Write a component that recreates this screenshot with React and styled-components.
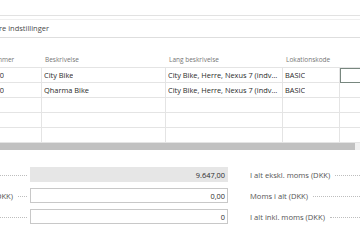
import React from 'react';
import styled, { createGlobalStyle } from 'styled-components';

const GlobalStyle = createGlobalStyle`
  html, body {
    margin: 0;
    padding: 0;
    background: #ffffff;
  }
  body {
    font-family: 'Open Sans', 'Noto Sans', sans-serif;
    color: #212121;
    overflow: hidden;
  }
`;

const Page = styled.div`
  width: 360px;
  height: 240px;
  overflow: hidden;
  background: #fff;
`;

const TopStrip = styled.div`
  height: 15px;
  border-bottom: 1px solid #e2e2e2;
`;

const OptionsBar = styled.div`
  margin-top: 3px;
  height: 17px;
  display: flex;
  align-items: center;
  border-top: 1px solid #efefef;
  border-bottom: 1px solid #dedede;
  overflow: hidden;
`;

const OptionsText = styled.span`
  margin-left: -11px;
  margin-top: -1px;
  font-size: 7.5px;
  color: #4a4a4a;
  white-space: nowrap;
`;

const Lines = styled.div`
  margin-top: 14px;
  margin-left: -14px;
  width: 394px;
`;

const Row = styled.div`
  display: grid;
  grid-template-columns: 56px 124px 117px 57px 40px;
  height: ${(p) => (p.$header ? 16 : 15)}px;
  box-sizing: border-box;
  border-bottom: 1px solid #e4e4e4;
`;

const HeadCell = styled.div`
  display: flex;
  align-items: center;
  padding-left: ${(p) => (p.$first ? 1 : 3)}px;
  font-size: 6.5px;
  color: #767676;
  white-space: nowrap;
  overflow: hidden;
`;

const Cell = styled.div`
  display: flex;
  align-items: center;
  box-sizing: border-box;
  padding: 0 1px 0 ${(p) => (p.$first ? 1 : 2)}px;
  border-right: 1px solid #e4e4e4;
  font-size: 7.4px;
  color: #2b2b2b;
  white-space: nowrap;
  overflow: hidden;
  ${(p) =>
    p.$focus &&
    `
    border: 1px solid #78877f;
    border-left-width: 1.5px;
    margin-bottom: -1px;
  `}
`;

const CellText = styled.span`
  overflow: hidden;
  text-overflow: ellipsis;
`;

const ScrollTrack = styled.div`
  height: 7px;
  display: flex;
  background: #f1f1f1;
`;

const ScrollThumb = styled.div`
  width: 355px;
  background: #c1c1c1;
`;

const Totals = styled.div`
  margin-top: 17px;
  margin-left: -120px;
  display: grid;
  grid-template-columns: 147px 198px 16px 140px;
  column-gap: 3px;
  row-gap: 6px;
`;

const LabelWrap = styled.div`
  display: flex;
  align-items: center;
  height: 15px;
  font-size: 7.6px;
  color: #555;
  white-space: nowrap;
  grid-column: ${(p) => (p.$right ? 4 : 1)};
`;

const Leader = styled.span`
  flex: 1;
  margin-left: 5px;
  margin-top: 2px;
  border-bottom: 1px dotted #bdbdbd;
`;

const Field = styled.div`
  grid-column: 2;
  height: 15px;
  box-sizing: border-box;
  display: flex;
  align-items: center;
  justify-content: flex-end;
  padding-right: 2px;
  font-size: 7.4px;
  color: #2b2b2b;
  background: ${(p) => (p.$disabled ? '#e6e6e6' : '#ffffff')};
  border: 1px solid ${(p) => (p.$disabled ? '#e6e6e6' : '#c8c8c8')};
`;

const columns = ['Nummer', 'Beskrivelse', 'Lang beskrivelse', 'Lokationskode', ''];

const lines = [
  ['1000', 'City Bike', 'City Bike, Herre, Nexus 7 (indvendigt gear)', 'BASIC', ''],
  ['1100', 'Qharma Bike', 'City Bike, Herre, Nexus 7 (indvendigt gear)', 'BASIC', ''],
  ['', '', '', '', ''],
  ['', '', '', '', ''],
  ['', '', '', '', ''],
];

const totals = [
  { left: 'Subtotal ekskl. moms (DKK)', value: '9.647,00', disabled: true, right: 'I alt ekskl. moms (DKK)' },
  { left: 'Fakturarabatbeløb ekskl. moms (DKK)', value: '0,00', right: 'Moms i alt (DKK)' },
  { left: 'Fakturarabat %', value: '0', right: 'I alt inkl. moms (DKK)' },
];

export default function App() {
  return (
    <Page>
      <GlobalStyle />
      <TopStrip />
      <OptionsBar>
        <OptionsText>Flere indstillinger</OptionsText>
      </OptionsBar>

      <Lines>
        <Row $header>
          {columns.map((c, i) => (
            <HeadCell key={i} $first={i === 0}>
              {c}
            </HeadCell>
          ))}
        </Row>
        {lines.map((line, r) => (
          <Row key={r}>
            {line.map((v, i) => (
              <Cell key={i} $first={i === 0} $focus={r === 0 && i === 4}>
                <CellText>{v}</CellText>
              </Cell>
            ))}
          </Row>
        ))}
      </Lines>
      <ScrollTrack>
        <ScrollThumb />
      </ScrollTrack>

      <Totals>
        {totals.map((t) => (
          <React.Fragment key={t.right}>
            <LabelWrap>
              {t.left}
              <Leader />
            </LabelWrap>
            <Field $disabled={t.disabled}>{t.value}</Field>
            <LabelWrap $right>
              {t.right}
              <Leader />
            </LabelWrap>
          </React.Fragment>
        ))}
      </Totals>
    </Page>
  );
}
